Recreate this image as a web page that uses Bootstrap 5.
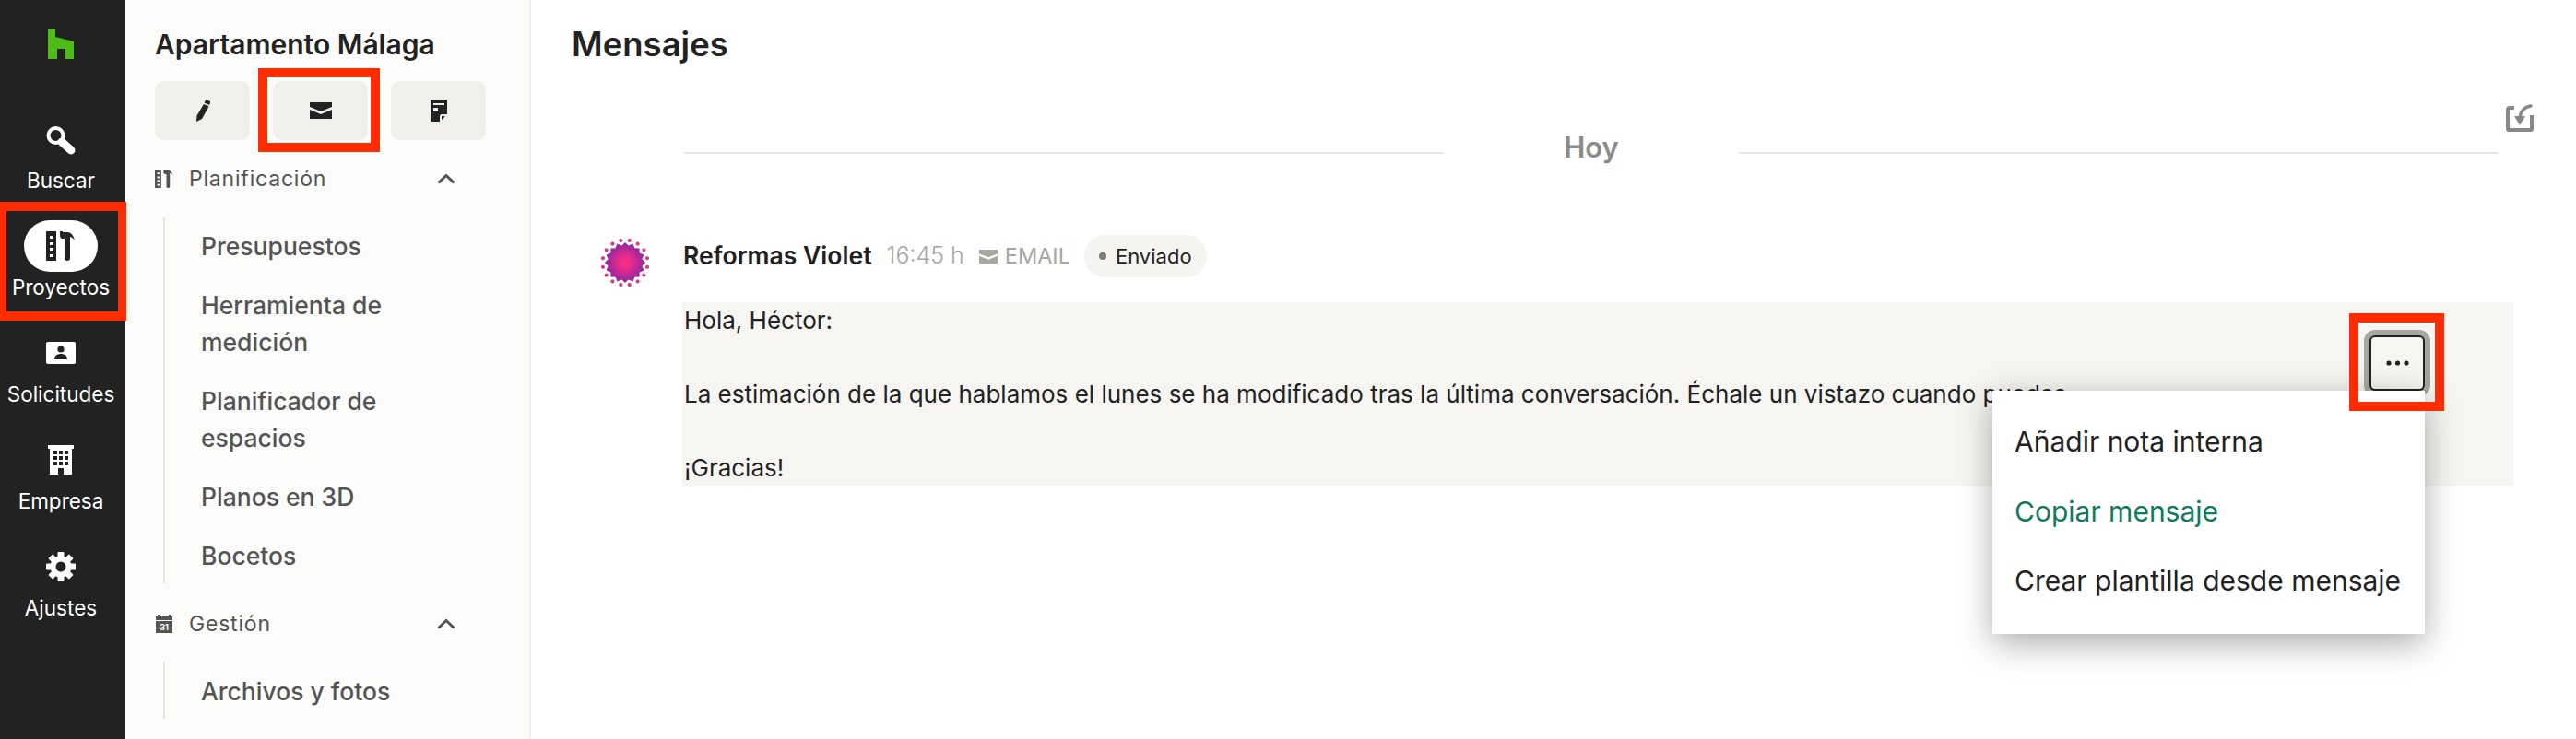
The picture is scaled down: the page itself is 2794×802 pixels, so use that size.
<!DOCTYPE html>
<html lang="es">
<head>
  <meta charset="UTF-8" />
  <meta name="viewport" content="width=device-width, initial-scale=1" />
  <title>Mensajes</title>
  <link href="https://cdn.jsdelivr.net/npm/bootstrap@5.3.0/dist/css/bootstrap.min.css" rel="stylesheet" />
  <style>
    html, body { height: 100%; margin: 0; overflow: hidden; }
    body { font-family: "Inter", "Liberation Sans", sans-serif; color: #222; background: #fff; }

    /* annotation frames */
    .red-frame { position: absolute; border: 10px solid #fe2c02; z-index: 1100; pointer-events: none; }

    /* left rail */
    .rail { width: 136px; background: #222; color: #fff; padding-top: 32px; }
    .rail-logo { height: 91px; padding-left: 52px; }
    .rail-item { height: 116px; color: #fff; text-decoration: none; position: relative; padding-right: 4px; }
    .rail-icon { height: 56px; }
    .rail-pill { width: 80px; height: 56px; border-radius: 28px; background: #fff; color: #222; }
    .rail-label { font-size: 22.5px; line-height: 34px; }
    .frame-rail { left: 0; top: -20px; width: 137px; height: 129px; border-width: 10px 9px 10px 7px; }

    /* project panel */
    .side-panel { width: 440px; background: #fbfbf9; border-right: 2px solid #f2f1ee; padding: 0 32px; }
    .side-title { font-size: 30px; font-weight: 600; line-height: 40px; margin: 28px 0 20px; color: #222; }
    .side-tabs { gap: 25px; }
    .side-tab { width: 103px; height: 64px; background: #f0efeb; border-radius: 10px; border: 0; position: relative; color: #222; }
    .frame-tab { left: -16px; top: -14px; width: 132px; height: 91px; }
    .sec-head { height: 40px; margin-top: 22px; margin-bottom: 21px; font-size: 23px; letter-spacing: .8px; color: #545454; padding-right: 48px; }
    .sec-head + .sec-list { margin-bottom: 24px; }
    .sec-head.next { margin-top: 0; }
    .sec-name { margin-left: 17px; }
    .sec-list { list-style: none; margin: 0 0 0 9px; padding: 12px 0 10px 39px; border-left: 2px solid #e6e5e1; max-width: 300px; }
    .sec-list li { font-size: 26.5px; line-height: 40px; font-weight: 500; color: #545454; margin-bottom: 24px; }
    .sec-list li:last-child { margin-bottom: 0; }

    /* main area */
    .msg-main { padding: 0 68px 0 32px; position: relative; }
    .msg-title { font-size: 36.5px; font-weight: 600; line-height: 48px; margin: 24px 0 0 12px; color: #222; }
    .msg-export { width: 30px; height: 30px; position: absolute; top: 113px; right: 46px; }
    .day-row { margin: 64px 16px 1px 134px; height: 48px; }
    .day-line { height: 2px; background: #e6e5e3; flex: 1 1 0; margin-top: 12px; }
    .day-text { width: 320px; text-align: center; font-size: 31px; font-weight: 600; color: #8b8b8b; line-height: 48px; }
    .msg-head { height: 46px; margin-top: 71px; margin-left: 44px; }
    .msg-avatar { width: 52px; height: 52px; margin-right: 37px; margin-top: 14px; flex: none; }
    .msg-from { font-size: 26.6px; font-weight: 600; color: #222; }
    .msg-time { font-size: 25px; font-weight: 300; color: #a8a69f; margin-left: 16px; }
    .msg-kind { font-size: 23.5px; color: #a8a69f; margin-left: 8px; }
    .msg-state { height: 46px; border-radius: 23px; background: #f5f4f1; padding: 0 16px; margin-left: 15px; font-size: 22px; color: #222; }
    .msg-dot { width: 8px; height: 8px; border-radius: 50%; background: #7c7c78; margin-right: 10px; }
    .msg-box { margin: 27px 0 0 132px; height: 199px; background: #f6f5f2; padding: 0 2px; font-size: 26px; line-height: 40px; position: relative; color: #222; }
    .msg-box p { margin: 0 0 40px; }
    .msg-more { position: absolute; top: 36px; right: 96px; width: 60px; height: 60px; padding: 0; border: 2px solid #222; border-radius: 6px; box-shadow: 0 0 0 6px #a8a79f; background: #f6f5f2; }
    .frame-more { left: -24px; top: -26px; width: 103px; height: 106px; }
    .msg-menu { display: block; top: 96px; right: 96px; width: 469px; height: 264px; padding: 18px 0 17px; border: 0; border-radius: 0; box-shadow: 0 10px 34px rgba(0, 0, 0, .33); z-index: 1000; }
    .msg-menu .dropdown-item { font-size: 30px; line-height: 75.5px; padding: 0 24px; color: #222; }
    .msg-menu .dropdown-item.green { color: #0f7a5e; }
  </style>
</head>
<body>
  <svg class="d-none">
    <symbol id="ico-tools" viewBox="0 0 32 32">
      <path fill-rule="evenodd" d="M0 0h11v32H0zM4 5v3h4V5zM4 12v3h4v-3zM4 18v3h4v-3zM4 25v3h4v-3z"/>
      <path d="M15 0h3v1h5c4 0 7 4 8 9-2-3-4-4-5-4v23a3 3 0 0 1-6 0V8h-3l-2-2z"/>
    </symbol>
    <symbol id="ico-mail" viewBox="0 0 24 18">
      <path d="M0 0h24v5L12 10 0 5z"/>
      <path d="M0 8l12 5 12-5v10H0z"/>
    </symbol>
  </svg>

  <div class="d-flex h-100">
    <!-- Left rail -->
    <nav class="rail flex-shrink-0 d-flex flex-column">
      <div class="rail-logo">
        <svg width="28" height="32" viewBox="0 0 28 32"><path fill="#4dbc15" d="M0 0h8v8l20 5v19h-9V21h-9v11H0z"/></svg>
      </div>
      <a class="rail-item d-flex flex-column align-items-center" href="#">
        <div class="rail-icon d-flex align-items-center justify-content-center">
          <svg width="32" height="33" viewBox="0 0 32 33"><circle cx="10.500" cy="12" r="8" fill="none" stroke="#fff" stroke-width="4"/><path d="M17 19l10 9" stroke="#fff" stroke-width="9" stroke-linecap="round"/><path d="M17 18l4 3" stroke="#fff" stroke-width="3"/></svg>
        </div>
        <span class="rail-label">Buscar</span>
      </a>
      <a class="rail-item d-flex flex-column align-items-center" href="#">
        <div class="rail-pill d-flex align-items-center justify-content-center">
          <svg width="32" height="32" fill="currentColor"><use href="#ico-tools"/></svg>
        </div>
        <span class="rail-label">Proyectos</span>
        <div class="red-frame frame-rail"></div>
      </a>
      <a class="rail-item d-flex flex-column align-items-center" href="#">
        <div class="rail-icon d-flex align-items-center justify-content-center">
          <svg width="32" height="24" viewBox="0 0 32 24"><rect width="32" height="24" rx="2" fill="#fff"/><circle cx="16" cy="8" r="3.600" fill="#222"/><path d="M9 19c0-4 3-6 7-6s7 2 7 6z" fill="#222"/></svg>
        </div>
        <span class="rail-label">Solicitudes</span>
      </a>
      <a class="rail-item d-flex flex-column align-items-center" href="#">
        <div class="rail-icon d-flex align-items-center justify-content-center">
          <svg width="28" height="32" viewBox="0 0 28 32">
            <path fill="#fff" d="M0 0h28v4h-2v28H2V4H0z"/>
            <path fill="#222" d="M6 6h4v4H6zM12 6h4v4h-4zM18 6h4v4h-4zM6 12h4v4H6zM12 12h4v4h-4zM18 12h4v4h-4zM6 18h4v4H6zM12 18h4v4h-4zM18 18h4v4h-4zM11 25h6v7h-6z"/>
          </svg>
        </div>
        <span class="rail-label">Empresa</span>
      </a>
      <a class="rail-item d-flex flex-column align-items-center" href="#">
        <div class="rail-icon d-flex align-items-center justify-content-center">
          <svg width="32" height="32" viewBox="0 0 32 32">
            <g fill="#fff">
              <rect x="12.500" y="0" width="7" height="32" rx="1"/>
              <rect x="12.500" y="0" width="7" height="32" rx="1" transform="rotate(45 16 16)"/>
              <rect x="12.500" y="0" width="7" height="32" rx="1" transform="rotate(90 16 16)"/>
              <rect x="12.500" y="0" width="7" height="32" rx="1" transform="rotate(135 16 16)"/>
              <circle cx="16" cy="16" r="11.500"/>
            </g>
            <circle cx="16" cy="16" r="5.500" fill="#222"/>
          </svg>
        </div>
        <span class="rail-label">Ajustes</span>
      </a>
    </nav>

    <!-- Project panel -->
    <aside class="side-panel flex-shrink-0 overflow-hidden">
      <div class="side-title">Apartamento Málaga</div>
      <div class="side-tabs d-flex">
        <button class="side-tab d-flex align-items-center justify-content-center" type="button">
          <svg width="16" height="24" viewBox="0 0 16 24" fill="currentColor"><path d="M9 5l5.500 2.500L7 21l-6 3 .5-6.500zM10.500 1.500a2 2 0 0 1 2.500-1l2 1a2 2 0 0 1 .8 2.700L15 6 9.600 3.500z"/></svg>
        </button>
        <button class="side-tab d-flex align-items-center justify-content-center" type="button">
          <svg width="24" height="18" fill="currentColor"><use href="#ico-mail"/></svg>
          <div class="red-frame frame-tab"></div>
        </button>
        <button class="side-tab d-flex align-items-center justify-content-center" type="button">
          <svg width="18" height="24" viewBox="0 0 18 24"><path fill="currentColor" d="M1 0h16a1 1 0 0 1 1 1v15l-8 8H1a1 1 0 0 1-1-1V1a1 1 0 0 1 1-1z"/><path fill="#f0efeb" d="M3 4h12v2H3zM3 9h5v4H3zM18 16v2l-6 6h-2v-6a2 2 0 0 1 2-2z"/><path fill="currentColor" d="M12 18h4l-4 4z"/></svg>
        </button>
      </div>

      <div class="sec-head d-flex align-items-center">
        <svg width="20" height="20" fill="currentColor" class="flex-shrink-0"><use href="#ico-tools"/></svg>
        <span class="sec-name flex-grow-1">Planificación</span>
        <svg width="20" height="12" viewBox="0 0 20 12"><path d="M1.500 10.500L10 2.500l8.500 8" fill="none" stroke="#545454" stroke-width="3"/></svg>
      </div>
      <ul class="sec-list">
        <li>Presupuestos</li>
        <li>Herramienta de medición</li>
        <li>Planificador de espacios</li>
        <li>Planos en 3D</li>
        <li>Bocetos</li>
      </ul>
      <div class="sec-head next d-flex align-items-center">
        <svg width="20" height="20" viewBox="0 0 20 20" class="flex-shrink-0"><path fill="currentColor" d="M3 0h2v2h10V0h2v2h2v4H1V2h2zM1 7h18v13H1z"/><text x="10" y="17" font-size="9" font-weight="700" text-anchor="middle" fill="#fbfbf9" letter-spacing="0">31</text></svg>
        <span class="sec-name flex-grow-1">Gestión</span>
        <svg width="20" height="12" viewBox="0 0 20 12"><path d="M1.500 10.500L10 2.500l8.500 8" fill="none" stroke="#545454" stroke-width="3"/></svg>
      </div>
      <ul class="sec-list">
        <li>Archivos y fotos</li>
      </ul>
    </aside>

    <!-- Messages -->
    <main class="msg-main flex-grow-1 overflow-hidden">
      <h1 class="msg-title">Mensajes</h1>
      <svg class="msg-export" viewBox="0 0 30 30"><path d="M9 4H4a2 2 0 0 0-2 2v21a1 1 0 0 0 1 1h24a1 1 0 0 0 1-1V12" fill="none" stroke="#888" stroke-width="4"/><path d="M27 2C20 3 16 7 15 14" fill="none" stroke="#888" stroke-width="3.500" stroke-linecap="round"/><path d="M9 13h12l-6 10z" fill="#888"/></svg>

      <div class="day-row d-flex align-items-center">
        <div class="day-line"></div>
        <div class="day-text">Hoy</div>
        <div class="day-line"></div>
      </div>

      <div class="msg-head d-flex align-items-center">
        <svg class="msg-avatar" viewBox="0 0 52 52">
          <defs>
            <radialGradient id="burst" gradientUnits="userSpaceOnUse" cx="26" cy="26" r="22">
              <stop offset="0" stop-color="#ff2d86"/>
              <stop offset=".4" stop-color="#e02a8e"/>
              <stop offset="1" stop-color="#86299f"/>
            </radialGradient>
          </defs>
          <g fill="url(#burst)">
            <rect x="10.400" y="10.400" width="31.200" height="31.200"/>
            <rect x="10.400" y="10.400" width="31.200" height="31.200" transform="rotate(22.500 26 26)"/>
            <rect x="10.400" y="10.400" width="31.200" height="31.200" transform="rotate(45 26 26)"/>
            <rect x="10.400" y="10.400" width="31.200" height="31.200" transform="rotate(67.500 26 26)"/>
          </g>
          <g fill="#ec2a8c">
            <circle cx="26" cy="1.500" r="2" transform="rotate(11.250 26 26)"/>
            <circle cx="26" cy="1.500" r="2" transform="rotate(33.750 26 26)"/>
            <circle cx="26" cy="1.500" r="2" transform="rotate(56.250 26 26)"/>
            <circle cx="26" cy="1.500" r="2" transform="rotate(78.750 26 26)"/>
            <circle cx="26" cy="1.500" r="2" transform="rotate(101.250 26 26)"/>
            <circle cx="26" cy="1.500" r="2" transform="rotate(123.750 26 26)"/>
            <circle cx="26" cy="1.500" r="2" transform="rotate(146.250 26 26)"/>
            <circle cx="26" cy="1.500" r="2" transform="rotate(168.750 26 26)"/>
            <circle cx="26" cy="1.500" r="2" transform="rotate(191.250 26 26)"/>
            <circle cx="26" cy="1.500" r="2" transform="rotate(213.750 26 26)"/>
            <circle cx="26" cy="1.500" r="2" transform="rotate(236.250 26 26)"/>
            <circle cx="26" cy="1.500" r="2" transform="rotate(258.750 26 26)"/>
            <circle cx="26" cy="1.500" r="2" transform="rotate(281.250 26 26)"/>
            <circle cx="26" cy="1.500" r="2" transform="rotate(303.750 26 26)"/>
            <circle cx="26" cy="1.500" r="2" transform="rotate(326.250 26 26)"/>
            <circle cx="26" cy="1.500" r="2" transform="rotate(348.750 26 26)"/>
          </g>
        </svg>
        <span class="msg-from">Reformas Violet</span>
        <span class="msg-time">16:45 h</span>
        <svg class="ms-3" width="20" height="15" fill="#a8a69f"><use href="#ico-mail"/></svg>
        <span class="msg-kind">EMAIL</span>
        <span class="msg-state d-inline-flex align-items-center"><span class="msg-dot"></span>Enviado</span>
      </div>

      <div class="msg-box">
        <p>Hola, Héctor:</p>
        <p>La estimación de la que hablamos el lunes se ha modificado tras la última conversación. Échale un vistazo cuando puedas.</p>
        <p>¡Gracias!</p>
        <button class="msg-more d-flex align-items-center justify-content-center" type="button">
          <svg width="25" height="6" viewBox="0 0 25 6" fill="#222"><circle cx="3" cy="3" r="2.600"/><circle cx="12.500" cy="3" r="2.600"/><circle cx="22" cy="3" r="2.600"/></svg>
          <div class="red-frame frame-more"></div>
        </button>
        <div class="dropdown-menu msg-menu">
          <a class="dropdown-item" href="#">Añadir nota interna</a>
          <a class="dropdown-item green" href="#">Copiar mensaje</a>
          <a class="dropdown-item" href="#">Crear plantilla desde mensaje</a>
        </div>
      </div>
    </main>
  </div>

  <script src="https://cdn.jsdelivr.net/npm/bootstrap@5.3.0/dist/js/bootstrap.bundle.min.js"></script>
</body>
</html>
